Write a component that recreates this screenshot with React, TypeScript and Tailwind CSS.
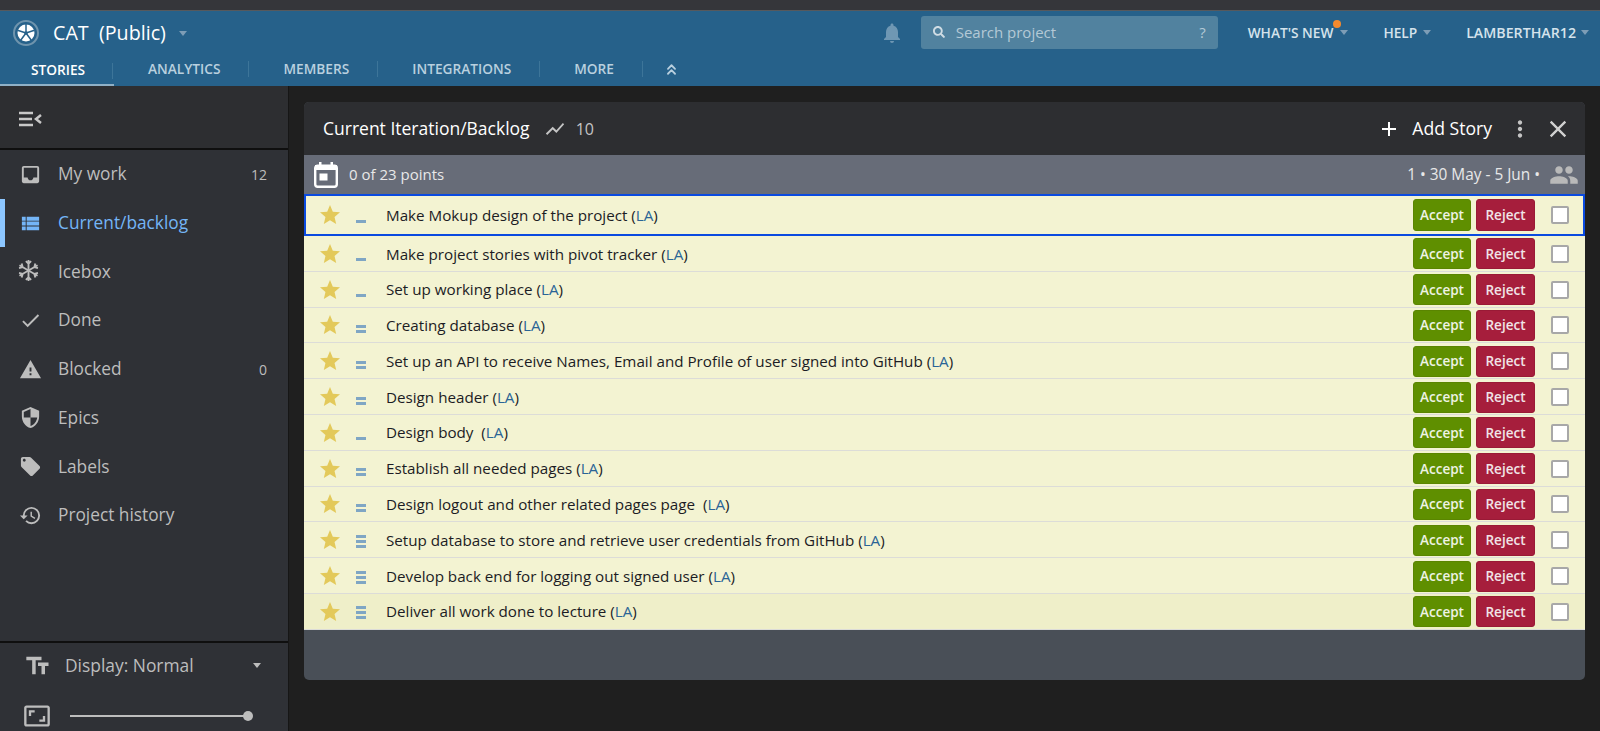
import React from 'react';
import {
  MdInbox, MdViewList, MdCheck, MdWarning, MdSecurity, MdLocalOffer, MdHistory,
  MdFormatSize, MdAspectRatio, MdShowChart, MdAdd, MdMoreVert, MdClose, MdPeople,
  MdStar, MdNotifications,
} from 'react-icons/md';
import { FaSearch } from 'react-icons/fa';
import { ChevronsUp } from 'lucide-react';

function SnowIcon({ className }: { className?: string }) {
  const arm = 'M12 12 V2 M9.5 3 L12 5.5 L14.5 3';
  return (
    <svg viewBox="1 1 22 22" fill="none" stroke="currentColor" strokeWidth="1.8" className={`${className} -translate-x-[2px] -translate-y-[1px]`}>
      {[0, 60, 120, 180, 240, 300].map((a) => (
        <path key={a} d={arm} transform={`rotate(${a} 12 12)`} />
      ))}
    </svg>
  );
}

function CalendarIcon() {
  return (
    <svg width="24" height="26" viewBox="0 0 24 26" className="flex-shrink-0 text-white">
      <rect x="1.2" y="3.7" width="21.6" height="21" rx="2.5" fill="none" stroke="currentColor" strokeWidth="2.4" />
      <rect x="1" y="3" width="22" height="5" fill="currentColor" />
      <rect x="5" y="0" width="2.5" height="5" fill="currentColor" />
      <rect x="16.5" y="0" width="2.5" height="5" fill="currentColor" />
      <rect x="5.5" y="11.5" width="8" height="7" fill="currentColor" />
    </svg>
  );
}

const tabs = ['ANALYTICS', 'MEMBERS', 'INTEGRATIONS', 'MORE'];

const navItems = [
  { label: 'My work', icon: MdInbox, count: '12' },
  { label: 'Current/backlog', icon: MdViewList, active: true },
  { label: 'Icebox', icon: SnowIcon },
  { label: 'Done', icon: MdCheck },
  { label: 'Blocked', icon: MdWarning, count: '0' },
  { label: 'Epics', icon: MdSecurity },
  { label: 'Labels', icon: MdLocalOffer },
  { label: 'Project history', icon: MdHistory },
];

const stories = [
  { title: 'Make Mokup design of the project', points: 1 },
  { title: 'Make project stories with pivot tracker', points: 1 },
  { title: 'Set up working place', points: 1 },
  { title: 'Creating database', points: 2 },
  { title: 'Set up an API to receive Names, Email and Profile of user signed into GitHub', points: 2 },
  { title: 'Design header', points: 2 },
  { title: 'Design body ', points: 1 },
  { title: 'Establish all needed pages', points: 2 },
  { title: 'Design logout and other related pages page ', points: 2 },
  { title: 'Setup database to store and retrieve user credentials from GitHub', points: 3 },
  { title: 'Develop back end for logging out signed user', points: 3 },
  { title: 'Deliver all work done to lecture', points: 3 },
];

function Caret({ className = 'border-t-[#7d9db6]' }: { className?: string }) {
  return <span className={`inline-block w-0 h-0 border-x-[4px] border-x-transparent border-t-[5px] ${className}`} />;
}

function Logo() {
  return (
    <svg width="26" height="26" viewBox="0 0 26 26" className="flex-shrink-0">
      <circle cx="13" cy="13" r="12" fill="#26618a" stroke="#6f94ad" strokeWidth="2" />
      <circle cx="13" cy="13" r="8.5" fill="#ffffff" />
      <g stroke="#26618a" strokeWidth="1.5">
        <path d="M13 13 L13 4" />
        <path d="M13 13 L21.5 10.2" />
        <path d="M13 13 L18.3 20.3" />
        <path d="M13 13 L7.7 20.3" />
        <path d="M13 13 L4.5 10.2" />
      </g>
      <circle cx="13" cy="13" r="1.8" fill="#26618a" />
    </svg>
  );
}

function Estimate({ points }: { points: number }) {
  return (
    <div className="w-[10px] h-[13px] flex flex-col justify-end gap-[2px] translate-y-[1px]">
      {Array.from({ length: points }).map((_, i) => (
        <div key={i} className="h-[3px] w-full bg-[#7fa6c4]" />
      ))}
    </div>
  );
}

function StoryRow({ title, points, selected, last }: { title: string; points: number; selected?: boolean; last?: boolean }) {
  return (
    <div className={`flex items-center ${selected ? 'h-[42px] border-2 border-[#0a4ae0] pl-[15px] pr-[14px]' : 'h-[35.8px] border-b border-[#dcdcd8] pl-[17px] pr-[16px] pt-[1px]'} ${last ? 'bg-[#efefc9]' : 'bg-[#f3f3d2]'}`}>
      <MdStar className="w-[24px] h-[24px] text-[#e3c95a] flex-shrink-0 -ml-[3px]" />
      <div className="ml-[14px] mr-[20px] flex-shrink-0"><Estimate points={points} /></div>
      <div className="flex-1 text-[15.2px] text-[#1c1c24] whitespace-pre truncate">
        {title} (<span className="text-[#2a6496]">LA</span>)
      </div>
      <button className={`w-[58px] rounded-[3px] bg-[#5f8f00] border border-[#5a8500] text-[#eef3e4] text-[13.5px] font-semibold ${selected ? 'h-[32px]' : 'h-[31px]'}`}>Accept</button>
      <button className={`ml-[5px] w-[59px] rounded-[3px] bg-[#a61e3c] border border-[#991a36] text-[#f1e4e7] text-[13.5px] font-semibold ${selected ? 'h-[32px]' : 'h-[31px]'}`}>Reject</button>
      <div className="ml-[16px] w-[18px] h-[18px] rounded-[2px] bg-white border-2 border-[#a8a8a8]" />
    </div>
  );
}

export default function App() {
  return (
    <div className="w-[1600px] h-[731px] overflow-hidden flex flex-col bg-[#1f1f1f] font-['Open_Sans',sans-serif]">
      <div className="h-[10px] bg-[#35363a] border-b border-[#56595d] flex-shrink-0 box-content" />

      {/* Top header */}
      <header className="h-[75px] bg-[#26618a] flex-shrink-0 flex flex-col">
        <div className="h-[43px] flex items-center pl-[13px] pr-[11px] pt-[1px]">
          <Logo />
          <span className="ml-[14px] text-[19.7px] text-white whitespace-pre">CAT  (Public)</span>
          <span className="ml-[13px] flex"><Caret /></span>
          <MdNotifications className="ml-auto w-[24px] h-[24px] text-[#6f97b3]" />
          <div className="ml-[17px] w-[297px] h-[33px] mt-[-2px] rounded-[3px] bg-[#51829f] flex items-center px-[12px] text-[15px] text-[#b4c9d6]">
            <FaSearch className="w-[12px] h-[12px] text-[#cfdce4]" />
            <span className="ml-[11px]">Search project</span>
            <span className="ml-auto">?</span>
          </div>
          <div className="ml-[30px] relative flex items-center text-[13.7px] font-semibold text-[#d5e3ec]">
            WHAT'S NEW
            <span className="absolute -top-[3px] left-[85px] w-[8px] h-[8px] rounded-full bg-[#f58a2e]" />
            <span className="ml-[7px] flex"><Caret /></span>
          </div>
          <div className="ml-[35px] flex items-center text-[13.7px] font-semibold text-[#d5e3ec]">
            HELP
            <span className="ml-[6px] flex"><Caret /></span>
          </div>
          <div className="ml-[35px] flex items-center text-[14.2px] font-semibold text-[#d5e3ec]">
            LAMBERTHAR12
            <span className="ml-[5px] flex"><Caret /></span>
          </div>
        </div>
        <nav className="h-[32px] flex items-center relative">
          <div className="w-[114px] h-full border-b-2 border-[#8fb0c6] flex items-center">
            <span className="w-[113px] pl-[31px] mt-[3px] h-[16px] flex items-center border-r border-[#3d7599] text-[13.7px] font-semibold text-white">STORIES</span>
          </div>
          {tabs.map((t) => (
            <div key={t} className="pl-[34px] pr-[28px] mb-[2px] h-[16px] flex items-center border-r border-[#3d7599] text-[13.7px] font-semibold text-[#b9d0df]">{t}</div>
          ))}
          <ChevronsUp className="ml-[20px] mb-[2px] w-[17px] h-[17px] text-[#b9d0df]" strokeWidth={2.5} />
        </nav>
      </header>

      <div className="flex-1 flex min-h-0">
        {/* Sidebar */}
        <aside className="w-[289px] flex-shrink-0 flex flex-col bg-[#2f3136] border-r border-[#161616]">
          <div className="h-[64px] flex-shrink-0 flex items-center pl-[18px] pt-[3px] bg-[#2d2e31] border-b-2 border-[#0f0f0f]">
            <svg width="24" height="18" viewBox="0 0 24 18" fill="none" stroke="#c8c8c8" strokeWidth="2.5">
              <path d="M1 3 H15 M1 9 H14 M1 15 H15" />
              <path d="M23 5 L18 9 L23 13" />
            </svg>
          </div>
          <div className="flex-1">
            {navItems.map(({ label, icon: Icon, count, active }) => (
              <div key={label} className={`h-[48.7px] flex items-center pr-[21px] ${active ? 'border-l-[5px] border-[#8cc6ff] pl-[14px] text-[#74b5f7]' : 'pl-[19px] text-[#bdbdbd]'}`}>
                <Icon className="w-[23px] h-[23px] flex-shrink-0" />
                <span className="ml-[16px] text-[17.3px]">{label}</span>
                {count && <span className="ml-auto text-[14px]">{count}</span>}
              </div>
            ))}
          </div>
          <div className="h-[90px] flex-shrink-0 border-t-2 border-[#0f0f0f] text-[#bdbdbd] overflow-hidden">
            <div className="h-[45px] flex items-center pl-[24px] pr-[27px]">
              <MdFormatSize className="w-[28px] h-[28px] -scale-x-100" />
              <span className="ml-[13px] text-[17.4px]">Display: Normal</span>
              <span className="ml-auto flex"><Caret className="border-t-[#bdbdbd]" /></span>
            </div>
            <div className="h-[55px] flex items-center pl-[23px]">
              <MdAspectRatio className="w-[28px] h-[28px]" />
              <div className="ml-[19px] w-[178px] h-[2px] bg-[#bdbdbd] relative">
                <span className="absolute -right-[5px] -top-[4px] w-[10px] h-[10px] rounded-full bg-[#bdbdbd]" />
              </div>
            </div>
          </div>
        </aside>

        {/* Backlog panel */}
        <main className="flex-1 pl-[15px] pr-[15px] pt-[16px]">
          <section className="w-[1281px] h-[578px] rounded-[5px] overflow-hidden bg-[#494f57] flex flex-col">
            <div className="h-[53px] flex-shrink-0 bg-[#2d2e31] flex items-center pl-[19px] pr-[13px]">
              <span className="text-[17.5px] text-white">Current Iteration/Backlog</span>
              <MdShowChart className="ml-[14px] w-[22px] h-[22px] text-[#c4c4c4]" />
              <span className="ml-[10px] text-[16px] text-[#c4c4c4]">10</span>
              <MdAdd className="ml-auto w-[24px] h-[24px] text-white" />
              <span className="ml-[11px] text-[17.6px] text-white">Add Story</span>
              <MdMoreVert className="ml-[15px] w-[26px] h-[26px] text-[#c4c4c4]" />
              <MdClose className="ml-[11px] w-[28px] h-[28px] text-[#d0d0d0]" />
            </div>
            <div className="h-[39px] flex-shrink-0 bg-[#676c78] flex items-center pl-[10px] pr-[6px]">
              <CalendarIcon />
              <span className="ml-[11px] text-[15px] text-[#e8e8e8]">0 of 23 points</span>
              <span className="ml-auto text-[15.4px] text-[#e8e8e8]">1 • 30 May - 5 Jun •</span>
              <MdPeople className="ml-[9px] w-[30px] h-[30px] text-[#b9b9b9]" />
            </div>
            <div>
              {stories.map((s, i) => (
                <StoryRow key={i} title={s.title} points={s.points} selected={i === 0} last={i === stories.length - 1} />
              ))}
            </div>
          </section>
        </main>
      </div>
    </div>
  );
}
